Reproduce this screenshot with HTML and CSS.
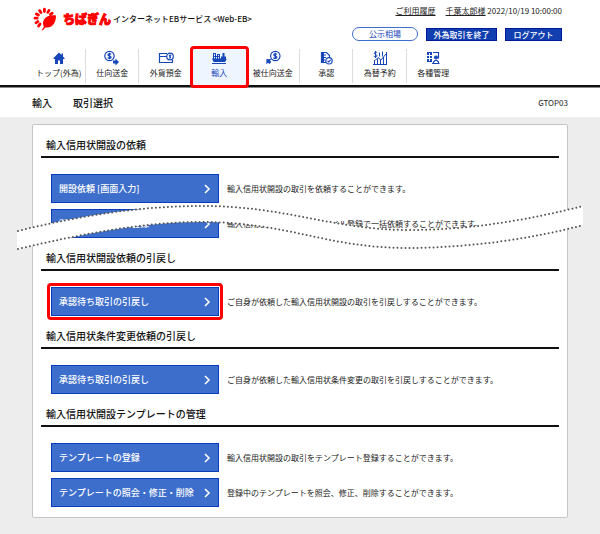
FILE: index.html
```html
<!DOCTYPE html>
<html lang="ja">
<head>
<meta charset="utf-8">
<title>輸入 取引選択</title>
<link rel="stylesheet" href="styles.css">
</head>
<body>
<header class="header">
  <div class="top">
    <div class="brand">
      <svg class="mark" viewBox="0 0 24 24" aria-hidden="true">
        <g stroke="#f00" stroke-width="2.8" stroke-linecap="round">
          <path d="M12.4 4.6V2.200M15.800 5.400L17 3.400M8.900 5.600L7.600 3.600M6.400 8.100L4.400 7M5.200 11.200H3M5.800 14.600L4 15.800M8 17L6.600 19M18.400 7.400L20.200 6.200"/>
        </g>
        <path fill="#f00" d="M24 8.6C18 7.600 12 9.500 11 15.500C10.900 17.500 11.400 18.600 12 19.600L9.600 23.200L10.600 23.600L13.400 20.400C21 21.500 24 15.500 24 8.600Z"/>
      </svg>
      <span class="bank">ちばぎん</span>
      <span class="service">インターネットEBサービス &lt;Web-EB&gt;</span>
    </div>
    <div class="account">
      <div class="user">
        <a href="#">ご利用履歴</a>
        <span><a href="#">千葉太郎様</a> 2022/10/19 10:00:00</span>
      </div>
      <div class="actions">
        <button class="pill" type="button">公示相場</button>
        <button class="dark wide" type="button">外為取引を終了</button>
        <button class="dark" type="button">ログアウト</button>
      </div>
    </div>
  </div>
  <nav class="nav">
    <a href="#"><svg viewBox="0 0 16 16"><path fill="currentColor" stroke="none" d="M8 2.500L2.500 8v1H4v5h3v-3.500h2V14h3V9h1.500V8L12 6.500V3.500h-1.500V5z"/></svg>トップ(外為)</a>
    <a href="#"><svg viewBox="0 0 16 16"><circle cx="5.500" cy="6" r="4.700"/><path d="M7.200 4.400C6.400 3.500 3.900 3.600 4 5C4.100 6.400 7.100 5.700 7.100 7.200C7.100 8.600 4.300 8.600 3.700 7.700M5.500 2.800v6.400"/><path fill="currentColor" stroke="none" d="M9 10.500h2.500V8.500l3.500 3.500-3.500 3.500v-2H9z"/></svg>仕向送金</a>
    <a href="#"><svg viewBox="0 0 16 16"><path d="M9 3.500H1.500v9h13v-2.500M1 6.500h8"/><circle cx="12" cy="6.500" r="3.300"/><path d="M13.200 5.400C12 4.500 10.700 5.600 12 6.500C13.400 7.300 12.200 8.500 10.900 7.700"/></svg>外貨預金</a>
    <a class="current" href="#" aria-current="page"><svg viewBox="0 0 16 16"><path stroke-width="1" d="M2.500 9V3.500M4.500 9V3.500M6.500 9V4.500M8.500 9V4.500M2 3.500h3M6 4.500h3M2 6.500h7"/><path fill="currentColor" stroke="none" d="M1 8.500h9V6.500h1.500V3h2v3.500H15V9h.8L14 12H2.500z"/><path stroke-width="1" d="M1 13.500h14"/></svg>輸入</a>
    <a href="#"><svg viewBox="0 0 16 16"><circle cx="10.300" cy="6" r="4.700"/><path d="M12 4.400C11.200 3.500 8.700 3.600 8.800 5C8.900 6.400 11.900 5.700 11.900 7.200C11.900 8.600 9.100 8.600 8.500 7.700M10.300 2.800v6.400"/><path fill="currentColor" stroke="none" d="M1.500 9l5 .2-1.500 1.600 1.300 1.300-1.800 2-1.500-1.300L1.300 14.300z"/></svg>被仕向送金</a>
    <a href="#"><svg viewBox="0 0 16 16"><path d="M8 12.500H3.500v-10h5l3 3V7M5 5h3M5 7.500h3M5 10h2"/><path fill="currentColor" stroke="none" d="M3 2h3v11H3z"/><circle cx="11" cy="10.800" r="3.200"/><path d="M9.500 10.800l1.200 1.200 2-2.200"/></svg>承認</a>
    <a href="#"><svg viewBox="0 0 16 16"><path stroke-width="1" d="M5 2.500C3.500 1.500 1.800 2.600 2.500 3.800C3 4.700 5 4.500 5 5.800C5 7 3 7.200 1.800 6.200M3.500 1v7M2.500 14V10M5.500 14V8.500M8.500 14V10M11.500 14V7M14.500 14V2M1 14.500h14M3 10.500l3-3 3 2.500 5-6M7.500 2.500v4M10.500 1.500v5"/></svg>為替予約</a>
    <a href="#"><svg viewBox="0 0 16 16"><path fill="currentColor" stroke="none" d="M2 2h5v10H2z"/><path stroke="#fff" stroke-width="1" d="M4.500 3v8M2 5.500h5M2 8.500h5"/><path d="M8 2.500h5.500v6M8.500 13.500v-1.500l1.500-1.500h2l1.500 1.500v1.500M7 13.500h7.500"/><circle cx="11" cy="7.500" r="1.400" fill="currentColor"/></svg>各種管理</a>
  </nav>
</header>

<div class="titlebar">
  <h1><span>輸入</span><span>取引選択</span></h1>
  <span>GTOP03</span>
</div>

<main class="main">
  <div class="card">
    <section>
      <h2>輸入信用状開設の依頼</h2>
      <div class="rows">
        <div class="row"><button class="go" type="button">開設依頼 [画面入力]<svg viewBox="0 0 8 10"><path d="M2 1l4 4-4 4"/></svg></button><p>輸入信用状開設の取引を依頼することができます。</p></div>
        <div class="row"><button class="go" type="button">開設依頼ファイル登録<svg viewBox="0 0 8 10"><path d="M2 1l4 4-4 4"/></svg></button><p>輸入信用状開設の取引をファイル登録で一括依頼することができます。</p></div>
      </div>
    </section>
    <section>
      <h2>輸入信用状開設依頼の引戻し</h2>
      <div class="rows">
        <div class="row"><button class="go marked" type="button">承認待ち取引の引戻し<svg viewBox="0 0 8 10"><path d="M2 1l4 4-4 4"/></svg></button><p>ご自身が依頼した輸入信用状開設の取引を引戻しすることができます。</p></div>
      </div>
    </section>
    <section>
      <h2>輸入信用状条件変更依頼の引戻し</h2>
      <div class="rows">
        <div class="row"><button class="go" type="button">承認待ち取引の引戻し<svg viewBox="0 0 8 10"><path d="M2 1l4 4-4 4"/></svg></button><p>ご自身が依頼した輸入信用状条件変更の取引を引戻しすることができます。</p></div>
      </div>
    </section>
    <section>
      <h2>輸入信用状開設テンプレートの管理</h2>
      <div class="rows">
        <div class="row"><button class="go" type="button">テンプレートの登録<svg viewBox="0 0 8 10"><path d="M2 1l4 4-4 4"/></svg></button><p>輸入信用状開設の取引をテンプレート登録することができます。</p></div>
        <div class="row"><button class="go" type="button">テンプレートの照会・修正・削除<svg viewBox="0 0 8 10"><path d="M2 1l4 4-4 4"/></svg></button><p>登録中のテンプレートを照会、修正、削除することができます。</p></div>
      </div>
    </section>
    <svg class="wave" viewBox="0 0 566 48" preserveAspectRatio="none" aria-hidden="true">
      <path fill="#fff" d="M0 28C65 12 125 3 185 3C270 3 315 27 393 27C455 27 515 16 566 3V22C515 36 450 45 390 45C310 45 270 19 185 19C125 19 65 31 0 47Z"/>
      <g class="dots">
        <path d="M1 28C65 12 125 3 185 3C270 3 315 27 393 27C455 27 515 16 566 3"/>
        <path d="M1 46C65 31 125 19 185 19C270 19 310 45 390 45C450 45 515 36 566 22"/>
      </g>
    </svg>
  </div>
</main>
</body>
</html>
```

FILE: styles.css
```css
* {
  box-sizing: border-box;
}

body {
  margin: 0;
  min-height: 100vh;
  background: #ededed;
  color: #222;
  font: 8px/12px "Noto Sans CJK JP", sans-serif;
}

a {
  color: inherit;
}

button {
  font: inherit;
  cursor: pointer;
}

.header {
  background: #fff;
  border-bottom: 2px solid #111;
}

.top {
  display: flex;
  justify-content: space-between;
  align-items: flex-start;
  min-height: 46px;
  padding: 5px 38px 0 32px;
}

.brand {
  display: flex;
  align-items: center;
  height: 28px;
  white-space: nowrap;
}

.mark {
  width: 24px;
  height: 24px;
  margin-right: 7px;
  fill: none;
}

.bank {
  margin-right: 2px;
  color: #f00;
  font-size: 12px;
  font-weight: 900;
  -webkit-text-stroke: 1px #f00;
}

.service {
  color: #111;
  font-weight: 500;
}

.account {
  display: flex;
  flex-direction: column;
  align-items: flex-end;
  gap: 10px;
}

.user {
  display: flex;
  gap: 10px;
}

.actions {
  display: flex;
  align-items: center;
  gap: 8px;
}

.actions button {
  padding: 0;
  line-height: 12px;
}

.pill {
  width: 66px;
  height: 14px;
  border: 1px solid #3d6ecb;
  border-radius: 7px;
  background: #fff;
  color: #1746b8;
}

.dark {
  width: 57px;
  height: 13px;
  border: 1px solid #00199b;
  background: #123fb0;
  color: #fff;
  font-weight: 500;
}

.dark.wide {
  width: 71px;
}

.nav {
  display: grid;
  grid-template-columns: repeat(8, 1fr);
  max-width: 428px;
  margin-left: 32px;
}

.nav a {
  position: relative;
  display: flex;
  flex-direction: column;
  align-items: center;
  gap: 1px;
  height: 39px;
  padding-top: 4px;
  text-decoration: none;
  white-space: nowrap;
}

.nav a:not(:last-child) {
  background: linear-gradient(#ddd, #ddd) right center / 1px 34px no-repeat;
}

.nav svg {
  width: 16px;
  height: 16px;
  color: #1746b8;
  fill: none;
  stroke: currentColor;
  stroke-width: 1.2;
}

.nav a.current {
  background: #eff5ff;
  color: #1746b8;
}

.nav a.current::after {
  content: "";
  position: absolute;
  inset: 0 -3px -3px;
  border: 3px solid #f00;
  border-radius: 4px;
}

.titlebar {
  display: flex;
  align-items: center;
  justify-content: space-between;
  height: 30px;
  padding: 0 32px;
  background: #fff;
  border-top: 1px solid #888;
}

.titlebar h1 {
  display: flex;
  gap: 21px;
  margin: 0;
  color: #111;
  font-size: 10px;
  font-weight: 500;
}

.main {
  padding: 7px 32px 15px;
}

.card {
  position: relative;
  padding: 0 8px 10px;
  border: 1px solid #c4c4c4;
  border-radius: 2px;
  background: #fff;
}

.card h2 {
  margin: 0;
  padding: 12px 5px 3px;
  border-bottom: 2px solid #111;
  color: #111;
  font-size: 10px;
  line-height: 16px;
  font-weight: 500;
}

.rows {
  display: grid;
  gap: 6px;
  padding: 16px 10px 0;
}

.row {
  display: flex;
  align-items: center;
  gap: 8px;
}

.row p {
  margin: 0;
}

.go {
  position: relative;
  display: flex;
  align-items: center;
  justify-content: space-between;
  flex: none;
  width: 168px;
  height: 29px;
  padding: 0 7px;
  border: 1px solid #0a3dbd;
  background: #3d6ecb;
  color: #fff;
  font-size: 9px;
  font-weight: 500;
}

.go svg {
  width: 8px;
  height: 10px;
  fill: none;
  stroke: #fff;
  stroke-width: 1.6;
}

.go.marked::after {
  content: "";
  position: absolute;
  inset: -5px;
  border: 3px solid #f00;
  border-radius: 4px;
}

.wave {
  position: absolute;
  top: 78px;
  left: -16px;
  width: calc(100% + 32px);
  height: 48px;
}

.dots {
  fill: none;
  stroke: #555;
  stroke-width: 2;
  stroke-linecap: round;
  stroke-dasharray: 0 4;
}
```
